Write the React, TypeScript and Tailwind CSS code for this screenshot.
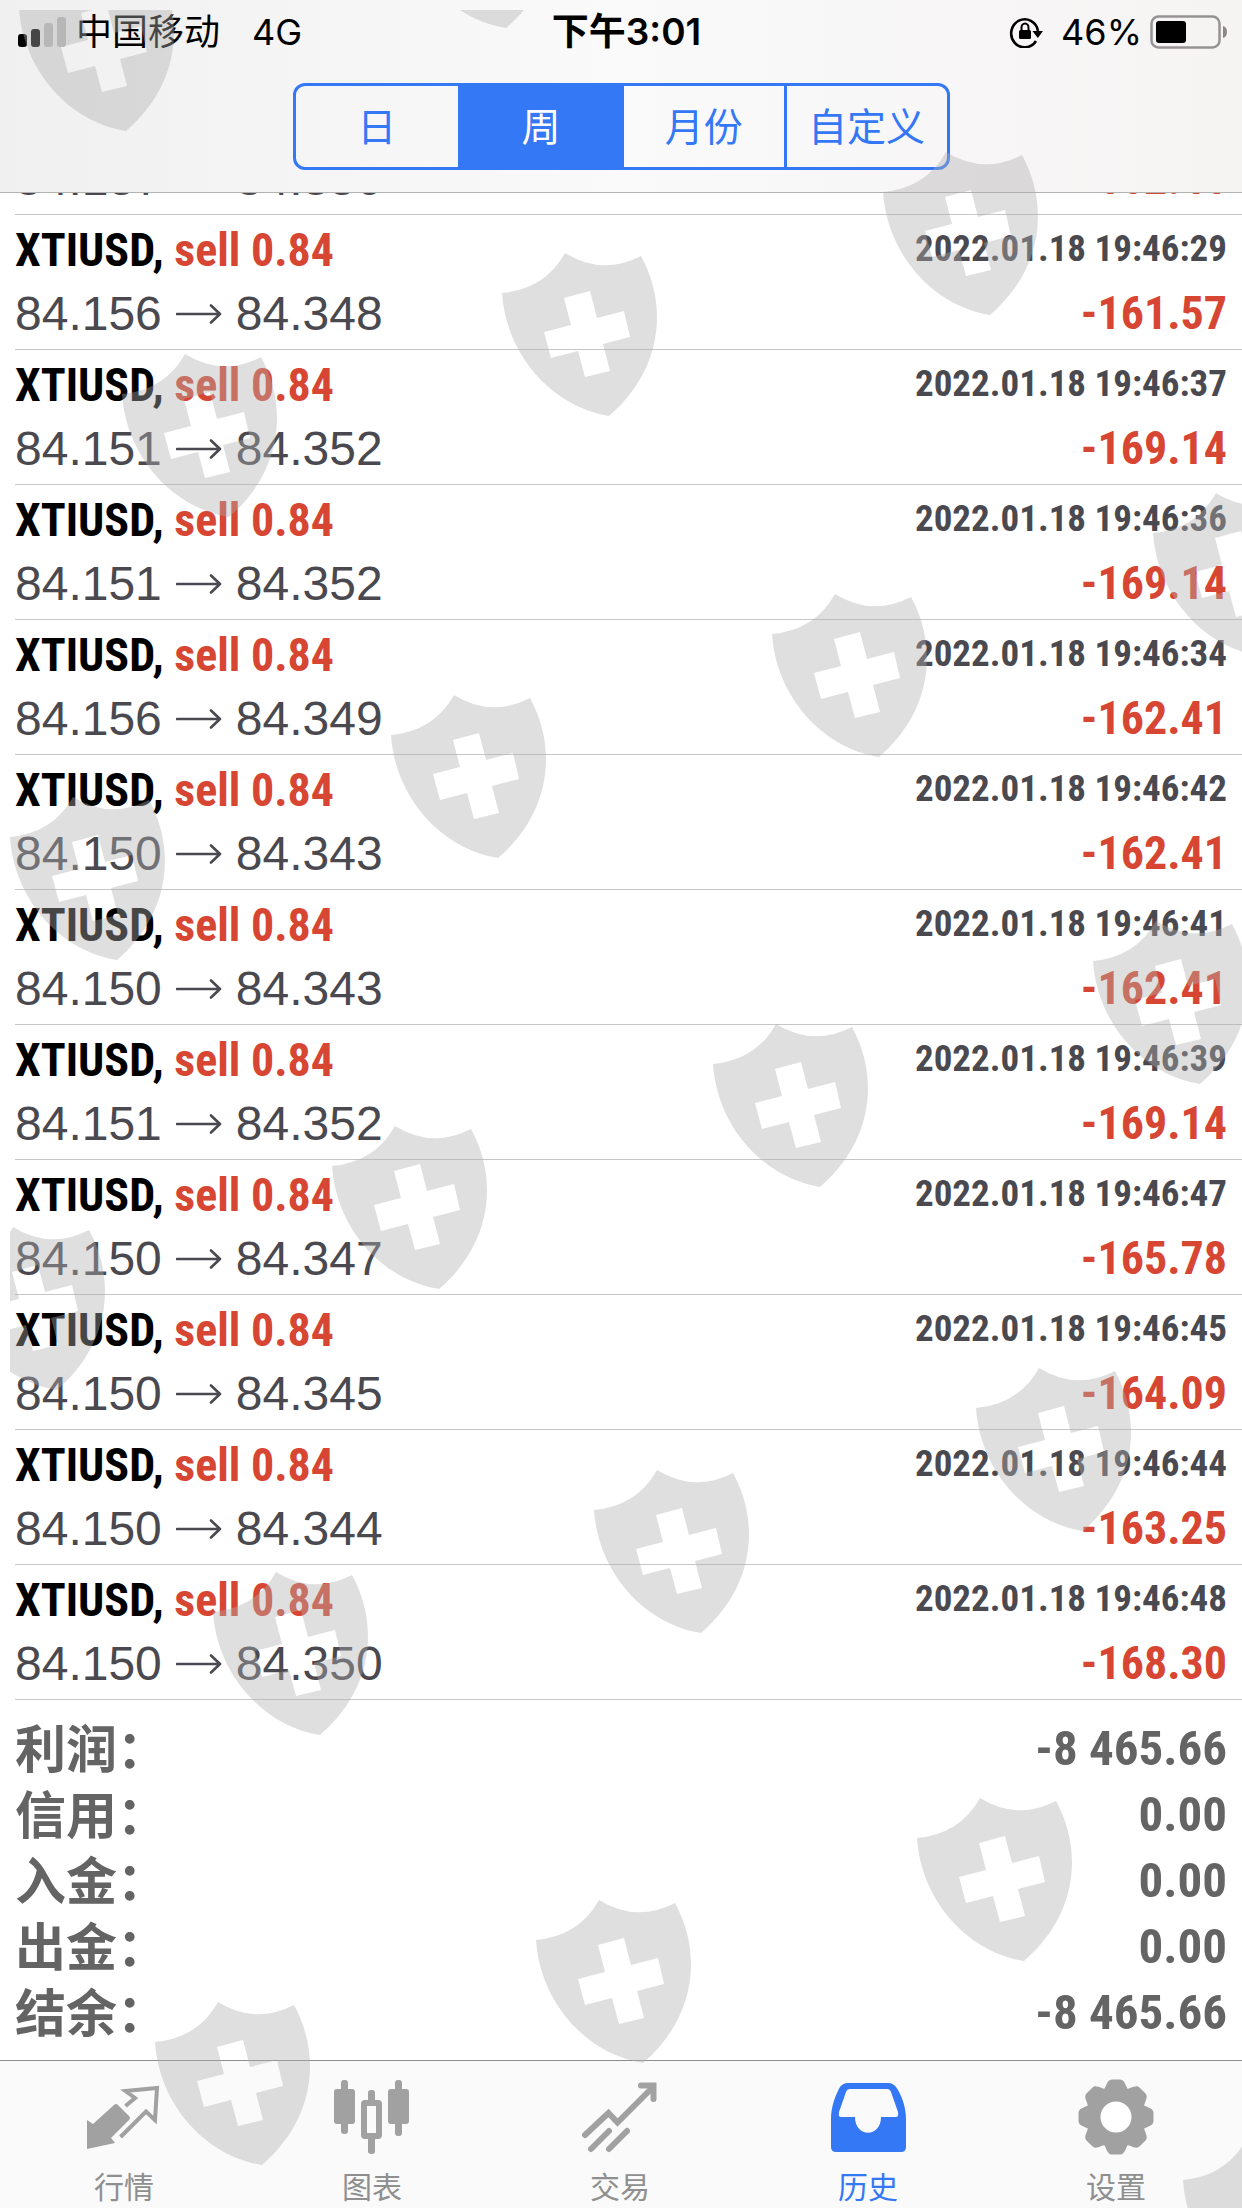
import type { ReactNode } from "react";

type Deal = { open: string; close: string; time: string; profit: string };

const symbol = "XTIUSD";
const side = "sell 0.84";

const previousDeal: Deal = { open: "84.157", close: "84.350", time: "2022.01.18 19:46:31", profit: "-162.41" };

const deals: Deal[] = [
  { open: "84.156", close: "84.348", time: "2022.01.18 19:46:29", profit: "-161.57" },
  { open: "84.151", close: "84.352", time: "2022.01.18 19:46:37", profit: "-169.14" },
  { open: "84.151", close: "84.352", time: "2022.01.18 19:46:36", profit: "-169.14" },
  { open: "84.156", close: "84.349", time: "2022.01.18 19:46:34", profit: "-162.41" },
  { open: "84.150", close: "84.343", time: "2022.01.18 19:46:42", profit: "-162.41" },
  { open: "84.150", close: "84.343", time: "2022.01.18 19:46:41", profit: "-162.41" },
  { open: "84.151", close: "84.352", time: "2022.01.18 19:46:39", profit: "-169.14" },
  { open: "84.150", close: "84.347", time: "2022.01.18 19:46:47", profit: "-165.78" },
  { open: "84.150", close: "84.345", time: "2022.01.18 19:46:45", profit: "-164.09" },
  { open: "84.150", close: "84.344", time: "2022.01.18 19:46:44", profit: "-163.25" },
  { open: "84.150", close: "84.350", time: "2022.01.18 19:46:48", profit: "-168.30" },
];

const totals = [
  ["利润", "-8 465.66"],
  ["信用", "0.00"],
  ["入金", "0.00"],
  ["出金", "0.00"],
  ["结余", "-8 465.66"],
];

const periods = ["日", "周", "月份", "自定义"];

const shields = [
  [19, -32], [399, -135], [883, 152], [502, 253], [122, 354], [1153, 493],
  [772, 594], [391, 695], [10, 797], [1093, 921], [713, 1024], [332, 1126],
  [-50, 1227], [976, 1368], [594, 1470], [213, 1572], [917, 1798], [536, 1900],
  [155, 2002], [1183, 2140],
];

function StatusBar() {
  return (
    <div className="grid h-16 grid-cols-3 items-center pb-px pl-[18px] pr-[15px] font-[Inter,'Noto_Sans_CJK_SC',sans-serif] text-[36px] leading-none text-black">
      <div className="flex items-center">
        <svg className="h-[30px] w-[48px]" viewBox="0 0 48 30" aria-hidden="true">
          <rect x="0" y="17" width="9" height="13" rx="3" />
          <rect x="13" y="12" width="9" height="18" rx="3" />
          <rect x="26" y="6" width="9" height="24" rx="3" fill="#bdbdbd" />
          <rect x="39" y="0" width="9" height="30" rx="3" fill="#bdbdbd" />
        </svg>
        <span className="ml-[10px]">中国移动</span>
        <span className="ml-8">4G</span>
      </div>
      <time className="pl-2 text-center text-[37px] font-semibold">下午3:01</time>
      <div className="flex items-center justify-end">
        <svg className="h-8 w-9" viewBox="0 0 36 32" aria-label="方向锁定">
          <path d="M27 25A13.5 14 0 1 1 29 15" fill="none" stroke="#000" strokeWidth="2.6" />
          <path d="M23.500 15h10.500l-5.200 7z" />
          <rect x="10" y="14" width="12" height="9" rx="1.500" />
          <path d="M12.500 15v-3.500a3.500 4 0 0 1 7 0V15" fill="none" stroke="#000" strokeWidth="2" />
        </svg>
        <span className="ml-4">46%</span>
        <svg className="ml-2 h-[34px] w-[77px]" viewBox="0 0 77 34" aria-label="电池">
          <rect x="1.500" y="1.500" width="68" height="31" rx="7" fill="none" stroke="#969394" strokeWidth="2.500" />
          <rect x="6" y="6" width="30" height="22" rx="3" />
          <path d="M73 11q4 1 4 6t-4 6z" fill="#8c898a" />
        </svg>
      </div>
    </div>
  );
}

function Arrow() {
  return (
    <svg className="mx-[14px] h-5 w-[46px]" viewBox="0 0 46 20" fill="none" stroke="#4a494f" strokeWidth="2.600" strokeLinecap="round" strokeLinejoin="round" aria-label="到">
      <path d="M1 10h43M35 1.500l9 8.500-9 8.500" />
    </svg>
  );
}

function DealRow({ deal }: { deal: Deal }) {
  return (
    <li className="flex h-[135px] shrink-0 flex-col border-b border-[#c6c6c8] pr-[15px] pt-1 font-['Roboto_Condensed',Roboto,sans-serif] text-[46px] font-bold leading-[63px]">
      <div className="flex items-start justify-between">
        <span className="text-black">
          {symbol}, <span className="text-[#d74632]">{side}</span>
        </span>
        <time className="text-[37px] leading-[60px] text-[#4a494f]">{deal.time}</time>
      </div>
      <div className="flex items-center justify-between">
        <span className="flex items-center font-['Liberation_Sans',sans-serif] text-[48px] font-normal text-[#4a494f]">
          {deal.open}
          <Arrow />
          {deal.close}
        </span>
        <span className="text-[#d74632]">{deal.profit}</span>
      </div>
    </li>
  );
}

function QuotesIcon() {
  return (
    <svg className="h-[76px] w-[76px]" viewBox="0 -6 76 76" aria-hidden="true">
      <path d="M1 35l6 4 21-19q2-2 4 0l11 11q2 2 0 4L25 53l4 5-28 6z" fill="currentColor" />
      <path d="M39.500 21l9.500-8L39.500 6 71 3l-2 32-9-8.500L34.500 52" fill="none" stroke="currentColor" strokeWidth="4" />
    </svg>
  );
}

function ChartIcon() {
  return (
    <svg className="h-[76px] w-[76px]" viewBox="0 0 76 76" fill="currentColor" aria-hidden="true">
      <rect x="7" y="1" width="7" height="54" rx="3" />
      <rect x="0" y="10" width="21" height="35" rx="3" />
      <rect x="34" y="11" width="7" height="15" rx="3" />
      <rect x="34" y="56" width="7" height="19" rx="3" />
      <rect x="30" y="24" width="15" height="33" rx="1" fill="none" stroke="currentColor" strokeWidth="6" />
      <rect x="61" y="1" width="7" height="56" rx="3" />
      <rect x="54" y="10" width="21" height="35" rx="3" />
    </svg>
  );
}

function TradeIcon() {
  return (
    <svg className="h-[76px] w-[76px]" viewBox="2 0 76 76" fill="none" stroke="currentColor" strokeWidth="6" strokeLinecap="round" aria-hidden="true">
      <path d="M5 56l23.500-22 9 9.500L73 8" />
      <path d="M61 6.500h12.500V20M11 70l18-18M29 70l18-18" />
    </svg>
  );
}

function HistoryIcon() {
  return (
    <svg className="h-[76px] w-[76px]" viewBox="0 0 76 76" aria-hidden="true">
      <path
        d="M1 40C1 27 6 15 10 8Q13 4 18 4H58Q63 4 66 8C71 15 76 27 76 40V68Q76 73 71 73H6Q1 73 1 68ZM20 10Q17 10 16 13L9 33Q8 38 11 38H25C25 59 51 59 51 38H66Q69 38 68 33L61 13Q60 10 57 10Z"
        fill="currentColor"
        fillRule="evenodd"
      />
    </svg>
  );
}

function SettingsIcon() {
  return (
    <svg className="h-[76px] w-[76px]" viewBox="-38 -38 76 76" fill="currentColor" aria-hidden="true">
      <circle r="29" />
      {[0, 45, 90, 135, 180, 225, 270, 315].map((angle) => (
        <path key={angle} d="M-15-24C-9-29-10-37.500-4-37.500H4C10-37.500 9-29 15-24Z" transform={`rotate(${angle})`} />
      ))}
      <circle r="15.500" fill="#fff" />
    </svg>
  );
}

const tabs: { label: string; icon: ReactNode; active?: boolean }[] = [
  { label: "行情", icon: <QuotesIcon /> },
  { label: "图表", icon: <ChartIcon /> },
  { label: "交易", icon: <TradeIcon /> },
  { label: "历史", icon: <HistoryIcon />, active: true },
  { label: "设置", icon: <SettingsIcon /> },
];

function ShieldPattern() {
  return (
    <div className="pointer-events-none absolute bottom-0 left-[10px] right-0 top-[10px] overflow-hidden" aria-hidden="true">
      <svg className="h-full w-full">
        {shields.map(([x, y]) => (
          <path
            key={`${x},${y}`}
            transform={`translate(${x - 10} ${y - 10})`}
            d="M0 40Q43 36 63 0Q100 23 139 3C166 52 161 117 107 163C50 154 4 102 0 40ZM62 45L69 72 42 79 49 105 76 98 83 124 108 118 101 91 128 84 122 58 95 65 88 38Z"
            fill="#afafaf"
            fillOpacity="0.4"
            fillRule="evenodd"
          />
        ))}
      </svg>
    </div>
  );
}

export default function App() {
  return (
    <div className="relative flex min-h-screen flex-col overflow-hidden bg-white font-['Noto_Sans_CJK_SC',sans-serif]">
      <header className="border-b border-[#b2b2b2] bg-linear-to-r from-[#f0f0f0] via-[#fafafa] to-[#f6f3f3] pb-[22px]">
        <StatusBar />
        <div role="group" aria-label="时间范围" className="mx-auto mt-[19px] grid h-[87px] w-[657px] max-w-full grid-cols-4 overflow-hidden rounded-xl border-3 border-[#3478f6]">
          {periods.map((period) => (
            <button
              key={period}
              type="button"
              aria-pressed={period === "周"}
              className="border-[#3478f6] pb-1 text-[39px] leading-none text-[#3478f6] not-first:border-l-3 aria-pressed:bg-[#3478f6] aria-pressed:text-white"
            >
              {period}
            </button>
          ))}
        </div>
      </header>

      <main className="flex-1">
        <ul className="pl-[15px]">
          <li className="flex h-[22px] flex-col justify-end overflow-hidden">
            <ul>
              <DealRow deal={previousDeal} />
            </ul>
          </li>
          {deals.map((deal) => (
            <DealRow key={deal.time} deal={deal} />
          ))}
        </ul>
        <dl className="px-[15px] pt-4 text-[#646464]">
          {totals.map(([label, value]) => (
            <div key={label} className="flex h-[66px] items-start justify-between">
              <dt className="text-[51px] font-bold leading-[60px]">{label}：</dt>
              <dd className="font-['Roboto_Condensed',Roboto,sans-serif] text-[49px] font-bold leading-[66px]">{value}</dd>
            </div>
          ))}
        </dl>
      </main>

      <nav className="grid h-[148px] grid-cols-5 border-t border-[#8e8e8e] bg-[#fafafa] pr-0.5">
        {tabs.map((tab) => (
          <button
            key={tab.label}
            type="button"
            aria-current={tab.active ? "page" : undefined}
            className="flex flex-col items-center pt-[18px] text-[#a1a1a1] aria-[current=page]:text-[#3478f6]"
          >
            {tab.icon}
            <span className={tab.active ? "mt-3 text-[30px] leading-9" : "mt-3 text-[30px] leading-9 text-[#8f8f8f]"}>{tab.label}</span>
          </button>
        ))}
      </nav>

      <ShieldPattern />
    </div>
  );
}
